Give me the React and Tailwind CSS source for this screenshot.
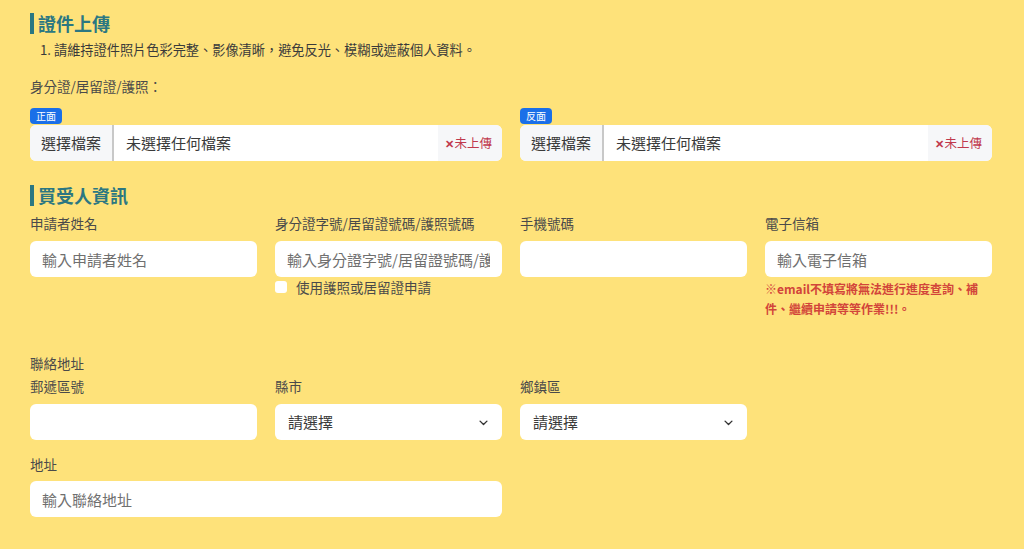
import React from "react";

const font = { fontFamily: '"Noto Sans CJK TC", "Noto Sans", sans-serif' };

function Title({ children }) {
  return (
    <div className="flex items-center h-[22px]">
      <span className="w-[4px] h-[21px] bg-[#2b7782] mr-[4px]" />
      <h2 className="text-[18px] font-bold text-[#2b7782] leading-[22px]">{children}</h2>
    </div>
  );
}

function FileInput({ badge }) {
  return (
    <div className="flex flex-col items-start">
      <span className="bg-[#1a6fe8] text-white text-[10px] leading-[16px] px-[6px] rounded-[4px] h-[16px] mb-[1px]">{badge}</span>
      <div className="flex w-full h-[36px] rounded-[6px] overflow-hidden bg-white">
        <div className="bg-[#f6f7f9] text-[#3a3a3a] text-[15px] flex items-center px-[11px] border-r-2 border-[#c8c8c8]">選擇檔案</div>
        <div className="flex-1 flex items-center pl-[12px] text-[15px] text-[#3a3a3a]">未選擇任何檔案</div>
        <div className="bg-[#f6f7f9] flex items-center pl-[7px] pr-[10px] text-[12.5px] text-[#c0394d]">
          <span className="font-bold text-[11px]">✕</span>
          <span>未上傳</span>
        </div>
      </div>
    </div>
  );
}

function Label({ children }) {
  return <div className="text-[13.5px] text-[#4a4a4a] leading-[20px]">{children}</div>;
}

function TextBox({ placeholder }) {
  return (
    <input
      readOnly
      placeholder={placeholder}
      className="block w-full h-[36px] bg-white rounded-[6px] px-[12px] text-[15px] placeholder:text-[#6f6f6f] outline-none"
      style={font}
    />
  );
}

function Select() {
  return (
    <div className="h-[36px] bg-white rounded-[6px] flex items-center justify-between pl-[13px] pr-[13px] text-[15px] text-[#3a3a3a]">
      <span>請選擇</span>
      <svg width="11" height="11" viewBox="0 0 16 16" fill="none" stroke="#333" strokeWidth="2" strokeLinecap="round" strokeLinejoin="round">
        <path d="M3 6l5 5 5-5" />
      </svg>
    </div>
  );
}

export default function App() {
  return (
    <div lang="zh-TW" className="w-[1024px] h-[549px] bg-[#fee27a] pl-[30px] pr-[32px] pt-[12px] overflow-hidden" style={font}>
      <Title>證件上傳</Title>
      <div className="text-[13.2px] text-[#3a3a3a] leading-[20px] mt-[6px] pl-[10px]">1. 請維持證件照片色彩完整、影像清晰，避免反光、模糊或遮蔽個人資料。</div>
      <div className="text-[13.5px] text-[#4a4a4a] leading-[20px] mt-[16px]">身分證/居留證/護照：</div>
      <div className="grid grid-cols-2 gap-x-[18px] mt-[12px]">
        <FileInput badge="正面" />
        <FileInput badge="反面" />
      </div>

      <div className="mt-[23px]">
        <Title>買受人資訊</Title>
      </div>
      <div className="grid grid-cols-4 gap-x-[18px] mt-[7px]">
        <div>
          <Label>申請者姓名</Label>
          <div className="mt-[8px]"><TextBox placeholder="輸入申請者姓名" /></div>
        </div>
        <div>
          <Label>身分證字號/居留證號碼/護照號碼</Label>
          <div className="mt-[8px]"><TextBox placeholder="輸入身分證字號/居留證號碼/護照號碼" /></div>
          <div className="flex items-center mt-0 text-[13.5px] text-[#4a4a4a] leading-[20px]">
            <span className="w-[12px] h-[12px] bg-white rounded-[3px] mr-[9px]" />
            使用護照或居留證申請
          </div>
        </div>
        <div>
          <Label>手機號碼</Label>
          <div className="mt-[8px]"><TextBox placeholder="" /></div>
        </div>
        <div>
          <Label>電子信箱</Label>
          <div className="mt-[8px]"><TextBox placeholder="輸入電子信箱" /></div>
          <div className="text-[12px] font-bold text-[#d2453a] leading-[20px] mt-[2px]">※email不填寫將無法進行進度查詢、補件、繼續申請等等作業!!!。</div>
        </div>
      </div>

      <div className="mt-[34px]">
        <Label>聯絡地址</Label>
      </div>
      <div className="grid grid-cols-4 gap-x-[18px] mt-[3px]">
        <div>
          <Label>郵遞區號</Label>
          <div className="mt-[8px]"><TextBox placeholder="" /></div>
        </div>
        <div>
          <Label>縣市</Label>
          <div className="mt-[8px]"><Select /></div>
        </div>
        <div>
          <Label>鄉鎮區</Label>
          <div className="mt-[8px]"><Select /></div>
        </div>
      </div>
      <div className="grid grid-cols-4 gap-x-[18px] mt-[14px]">
        <div className="col-span-2">
          <Label>地址</Label>
          <div className="mt-[7px]"><TextBox placeholder="輸入聯絡地址" /></div>
        </div>
      </div>
    </div>
  );
}
